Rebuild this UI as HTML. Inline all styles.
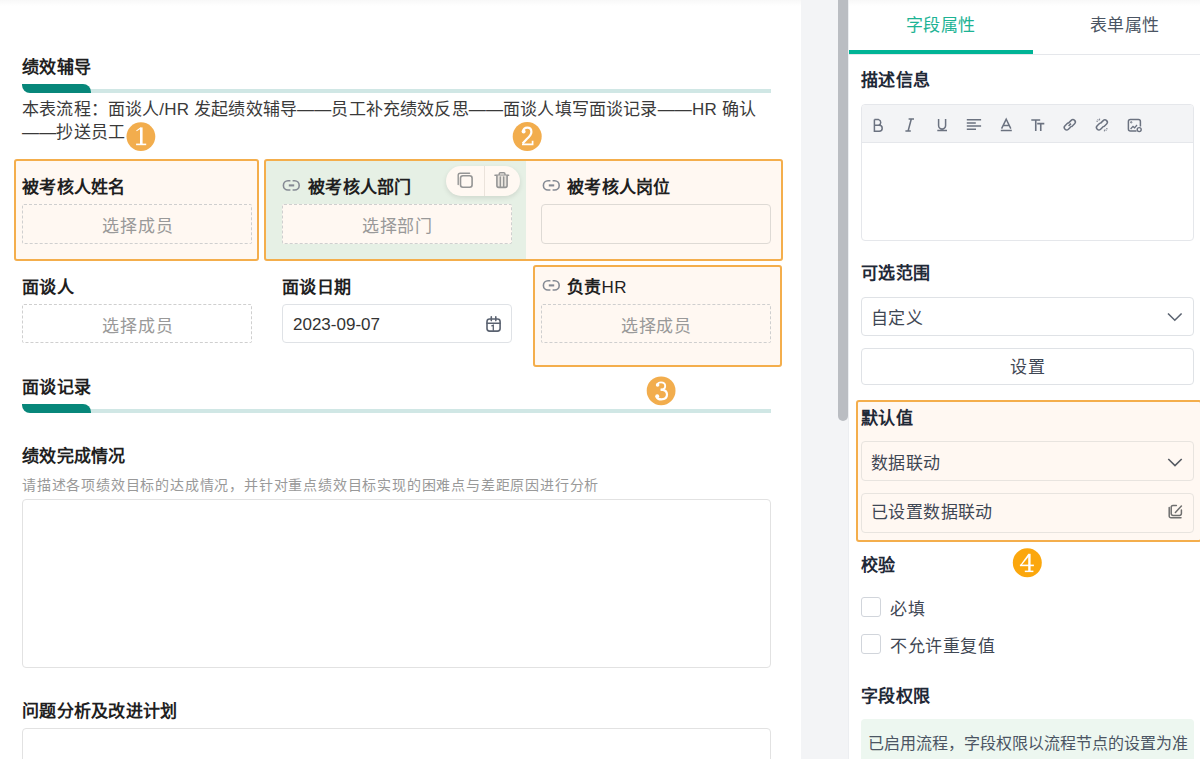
<!DOCTYPE html>
<html lang="zh-CN">
<head>
<meta charset="utf-8">
<style>
*{box-sizing:border-box}
html,body{margin:0;padding:0;width:1200px;height:759px;overflow:hidden;background:#fff;font-family:"Liberation Sans",sans-serif}
.a{position:absolute}
.t{position:absolute;white-space:nowrap;line-height:20px;font-size:17px}
.b{font-weight:bold;letter-spacing:0.35px}
.lab{color:#1f1f1f;font-weight:bold;letter-spacing:0.3px}
.dash{position:absolute;border:1px dashed #cfcfcf;border-radius:2px}
.ph{position:absolute;white-space:nowrap;line-height:20px;font-size:17px;color:#999;text-align:center;letter-spacing:0.8px;text-indent:0.8px}
.box{position:absolute;border:2px solid #f4ae4c;border-radius:3px}
.badge{position:absolute;width:29px;height:29px;border-radius:50%;background:#f2ad4d;color:#fff;font-family:"Liberation Serif",serif;font-size:26px;line-height:30px;text-align:center;-webkit-text-stroke:0.5px #fff}
.rt{color:#1f2937}
.inp{position:absolute;border:1px solid #dfe2e6;border-radius:4px}
</style>
</head>
<body>
<!-- top shade -->
<div class="a" style="left:0;top:0;width:1200px;height:6px;background:linear-gradient(#f8f8f8,#ffffff)"></div>

<!-- ============ LEFT CANVAS ============ -->
<div class="t b" style="left:22px;top:58px;color:#1f1f1f">绩效辅导</div>
<div class="a" style="left:91px;top:89px;width:680px;height:4px;background:#d0e7e5"></div>
<div class="a" style="left:22px;top:84px;width:69px;height:9px;background:#07877a;border-radius:0 8px 0 8px"></div>
<div class="t" style="left:22px;top:98px;line-height:23px;color:#3a3a3a;letter-spacing:0.17px">本表流程：面谈人/HR 发起绩效辅导——员工补充绩效反思——面谈人填写面谈记录——HR 确认<br>——抄送员工</div>

<!-- row 1 highlight boxes -->
<div class="a" style="left:14px;top:159px;width:245px;height:102px;background:#fff8f2;border-radius:3px"></div>
<div class="a" style="left:264px;top:159px;width:519px;height:102px;background:#fff8f2;border-radius:3px"></div>
<div class="a" style="left:266px;top:161px;width:260px;height:98px;background:#e6f0e5"></div>
<div class="box" style="left:14px;top:159px;width:245px;height:102px"></div>
<div class="box" style="left:264px;top:159px;width:519px;height:102px"></div>

<!-- row1 col1 -->
<div class="t lab" style="left:22px;top:178px">被考核人姓名</div>
<div class="dash" style="left:22px;top:204px;width:230px;height:40px"></div>
<div class="ph" style="left:22px;top:217px;width:231px">选择成员</div>

<!-- row1 col2 -->
<svg class="a" style="left:281px;top:178px" width="21" height="15" viewBox="0 0 21 15"><g fill="none" stroke="#858a94" stroke-width="1.6"><path d="M9.4 2.8 H7 A4.6 4.6 0 0 0 7 12 H9.4"/><path d="M11.6 2.8 H13.6 A4.6 4.6 0 0 1 13.6 12 H11.6"/><path d="M7.8 7.4 H13.2" stroke-width="2.1"/></g></svg>
<div class="t lab" style="left:308px;top:178px">被考核人部门</div>
<div class="dash" style="left:282px;top:204px;width:230px;height:40px;background:#fff8f2"></div>
<div class="ph" style="left:282px;top:217px;width:230px">选择部门</div>
<!-- action pill -->
<div class="a" style="left:446px;top:166px;width:74px;height:30px;border-radius:15px;background:#fff8f2;box-shadow:0 2px 5px rgba(0,0,0,0.10)"></div>
<div class="a" style="left:484px;top:166px;width:1px;height:30px;background:#ebe3db"></div>
<svg class="a" style="left:452px;top:168px" width="62" height="24" viewBox="452 168 62 24"><g fill="none" stroke="#959595" stroke-linecap="round"><path d="M458.2 184.5 V175.3 A2 2 0 0 1 460.2 173.3 H469.6" stroke-width="1.4"/><rect x="460.5" y="175.8" width="11.6" height="11.4" rx="2.4" stroke-width="1.6"/><path d="M495 175.3 H508.6" stroke-width="1.6"/><path d="M499.2 175 V174 A1.2 1.2 0 0 1 500.4 172.8 H503.8 A1.2 1.2 0 0 1 505 174 V175" stroke-width="1.4"/><path d="M496.9 175.5 V185.6 A1.8 1.8 0 0 0 498.7 187.4 H505.3 A1.8 1.8 0 0 0 507.1 185.6 V175.5" stroke-width="1.6" fill="#e9e4de"/><path d="M500.3 177 V186.5 M503.7 177 V186.5" stroke-width="1.4"/></g></svg>

<!-- row1 col3 -->
<svg class="a" style="left:541px;top:178px" width="21" height="15" viewBox="0 0 21 15"><g fill="none" stroke="#858a94" stroke-width="1.6"><path d="M9.4 2.8 H7 A4.6 4.6 0 0 0 7 12 H9.4"/><path d="M11.6 2.8 H13.6 A4.6 4.6 0 0 1 13.6 12 H11.6"/><path d="M7.8 7.4 H13.2" stroke-width="2.1"/></g></svg>
<div class="t lab" style="left:567px;top:178px">被考核人岗位</div>
<div class="inp" style="left:541px;top:204px;width:230px;height:40px;border-color:#dedad5"></div>

<!-- row 2 -->
<div class="a" style="left:533px;top:265px;width:249px;height:102px;background:#fff8f2;border-radius:3px"></div>
<div class="box" style="left:533px;top:265px;width:249px;height:102px"></div>

<div class="t lab" style="left:22px;top:278px">面谈人</div>
<div class="dash" style="left:22px;top:304px;width:230px;height:39px"></div>
<div class="ph" style="left:22px;top:317px;width:231px">选择成员</div>

<div class="t lab" style="left:282px;top:278px">面谈日期</div>
<div class="inp" style="left:282px;top:304px;width:230px;height:39px"></div>
<div class="t" style="left:293px;top:315px;color:#333">2023-09-07</div>
<svg class="a" style="left:484px;top:314px" width="20" height="20" viewBox="484 314 20 20"><g fill="none" stroke="#5a6270" stroke-width="1.6" stroke-linecap="round"><rect x="487" y="319" width="13.1" height="12.1" rx="2.6"/><path d="M491.3 316.8 V320.6 M495.8 316.8 V320.6 M487 323.2 H500.1"/><path d="M491.8 325.8 L493.3 325.2 V330.3" stroke-width="1.3"/></g></svg>

<svg class="a" style="left:541px;top:278px" width="21" height="15" viewBox="0 0 21 15"><g fill="none" stroke="#858a94" stroke-width="1.6"><path d="M9.4 2.8 H7 A4.6 4.6 0 0 0 7 12 H9.4"/><path d="M11.6 2.8 H13.6 A4.6 4.6 0 0 1 13.6 12 H11.6"/><path d="M7.8 7.4 H13.2" stroke-width="2.1"/></g></svg>
<div class="t lab" style="left:567px;top:278px">负责<span style="font-weight:normal;letter-spacing:0.3px">HR</span></div>
<div class="dash" style="left:541px;top:304px;width:230px;height:39px"></div>
<div class="ph" style="left:541px;top:317px;width:230px">选择成员</div>

<!-- section 2 -->
<div class="t b" style="left:22px;top:378px;color:#1f1f1f">面谈记录</div>
<div class="a" style="left:91px;top:409px;width:680px;height:4px;background:#d0e7e5"></div>
<div class="a" style="left:22px;top:404px;width:69px;height:9px;background:#07877a;border-radius:0 8px 0 8px"></div>

<div class="t lab" style="left:22px;top:447px">绩效完成情况</div>
<div class="t" style="left:22px;top:475px;font-size:14px;letter-spacing:0.8px;color:#999">请描述各项绩效目标的达成情况，并针对重点绩效目标实现的困难点与差距原因进行分析</div>
<div class="inp" style="left:22px;top:499px;width:749px;height:169px;border-color:#e2e2e2"></div>

<div class="t lab" style="left:22px;top:702px">问题分析及改进计划</div>
<div class="inp" style="left:22px;top:728px;width:749px;height:100px;border-color:#e2e2e2"></div>

<!-- ============ MIDDLE GRAY + SCROLLBAR ============ -->
<div class="a" style="left:801px;top:0;width:47px;height:759px;background:#f3f4f6"></div>
<div class="a" style="left:838px;top:-10px;width:10px;height:431px;background:#babdc2;border-radius:5px"></div>

<!-- ============ RIGHT PANEL ============ -->
<div class="a" style="left:848px;top:0;width:352px;height:759px;background:#fff;border-left:1px solid #eceef1"></div>
<div class="a" style="left:849px;top:0;width:351px;height:6px;background:linear-gradient(#f8f8f8,#ffffff)"></div>
<div class="t" style="left:906px;top:16px;color:#1db394;letter-spacing:0.4px">字段属性</div>
<div class="t" style="left:1090px;top:16px;color:#4b5563;letter-spacing:0.4px">表单属性</div>
<div class="a" style="left:849px;top:54px;width:351px;height:1px;background:#e5e7eb"></div>
<div class="a" style="left:849px;top:50px;width:184px;height:4px;background:#00b496"></div>

<div class="t b rt" style="left:861px;top:71px">描述信息</div>
<div class="inp" style="left:861px;top:104px;width:333px;height:137px;border-color:#e5e7eb"></div>
<div class="a" style="left:862px;top:105px;width:331px;height:38px;background:#f3f4f6;border-bottom:1px solid #e5e7eb;border-radius:3px 3px 0 0"></div>

<svg class="a" style="left:862px;top:106px" width="300" height="34" viewBox="862 106 300 34"><g fill="none" stroke="#6b7280" stroke-width="1.5" stroke-linecap="butt">
<path d="M874.4 119.6 H878.6 A2.9 2.9 0 0 1 878.6 125.2 H874.4 M874.4 125.2 H879.2 A3 3 0 0 1 879.2 131.2 H874.4 Z M874.4 119.6 V131.2"/>
<path d="M908.6 119 H914 M905.4 131 H910.8 M911.3 119 L908.1 131"/>
<path d="M938.6 119 V125.6 A3.5 3.5 0 0 0 945.6 125.6 V119 M937.3 130.6 H947"/>
<path d="M966.8 119.8 H981.1 M966.8 123 H975.8 M966.8 126.1 H981.1 M966.8 129.3 H976"/>
<path d="M1001.6 128.6 L1006.2 119.2 L1010.8 128.6 M1003.2 125.4 H1009.2 M1000.8 130.6 H1011.8"/>
<path d="M1031.3 120 H1040.2 M1035.75 120 V131 M1037.2 123.6 H1044.3 M1040.75 123.6 V131" stroke-width="1.6"/>
<path d="M1068.2 123.4 L1071.2 120.4 A2.3 2.3 0 0 1 1074.6 123.8 L1071.6 126.8 M1071.4 126.2 L1068.4 129.2 A2.3 2.3 0 0 1 1065 125.8 L1068 122.8 M1068.6 126 L1071 123.6"/>
<path d="M1100.4 123.4 L1103.2 120.6 A2.3 2.3 0 0 1 1106.6 124 L1103.8 126.8 M1103.6 126.2 L1100.6 129.2 A2.3 2.3 0 0 1 1097.2 125.8 L1100 123"/>
<path d="M1097.6 119.2 L1098.9 120.5 M1099.6 118.6 V120.2 M1096.4 121.2 H1098 M1106.4 130.8 L1105.1 129.5 M1104.4 131.4 V129.8 M1107.6 128.8 H1106" stroke-width="0.9"/>
<path d="M1136.5 131 H1130.4 A2 2 0 0 1 1128.4 129 V121.5 A2 2 0 0 1 1130.4 119.5 H1138.4 A2 2 0 0 1 1140.4 121.5 V126.4"/>
<path d="M1130.6 129 L1133 126.4 L1134.6 127.8 L1137 125" stroke-width="1.3"/>
<circle cx="1131.2" cy="122.3" r="0.7" stroke-width="1"/>
<circle cx="1139.2" cy="129.6" r="2" stroke-width="1.4"/>
</g></svg>
<div class="t b rt" style="left:861px;top:264px">可选范围</div>
<div class="inp" style="left:861px;top:297px;width:333px;height:39px"></div>
<div class="t" style="left:871px;top:309px;color:#3f4754;letter-spacing:0.3px">自定义</div>
<svg class="a" style="left:1166px;top:311px" width="18" height="12" viewBox="0 0 18 12"><path d="M2 2.5 L8.8 9.2 L15.6 2.5" fill="none" stroke="#5b6370" stroke-width="1.6"/></svg>
<div class="inp" style="left:861px;top:348px;width:333px;height:37px"></div>
<div class="t" style="left:1010px;top:358px;color:#3f4754;letter-spacing:0.8px">设置</div>

<!-- default value box -->
<div class="a" style="left:856px;top:400px;width:346px;height:142px;background:#fff8f2;border:2px solid #f4ae4c;border-radius:3px"></div>
<div class="t b rt" style="left:861px;top:409px">默认值</div>
<div class="inp" style="left:861px;top:441px;width:333px;height:40px;border-color:#e8e4df"></div>
<div class="t" style="left:871px;top:454px;color:#3f4754;letter-spacing:0.4px">数据联动</div>
<svg class="a" style="left:1166px;top:456px" width="18" height="12" viewBox="0 0 18 12"><path d="M2.3 3 L9 9.6 L15.7 3" fill="none" stroke="#555a62" stroke-width="1.6"/></svg>
<div class="inp" style="left:861px;top:493px;width:333px;height:40px;border-color:#e8e4df"></div>
<div class="t" style="left:871px;top:503px;color:#3f4754;letter-spacing:0.4px">已设置数据联动</div>
<svg class="a" style="left:1164px;top:500px" width="22" height="22" viewBox="1164 500 22 22"><g fill="none" stroke="#6f6f6f" stroke-linecap="round"><path d="M1176.4 505.5 H1173 A1.8 1.8 0 0 0 1171.2 507.3 V513.6 A1.8 1.8 0 0 0 1173 515.4 H1179.6 A1.8 1.8 0 0 0 1181.4 513.6 V510" stroke-width="1.5"/><path d="M1169.2 507.6 V516 A1.8 1.8 0 0 0 1171 517.8 H1181" stroke-width="1.5"/><path d="M1175.4 512.4 L1181.4 506" stroke-width="1.5"/></g></svg>

<div class="t b rt" style="left:861px;top:556px">校验</div>
<div class="inp" style="left:861px;top:597px;width:20px;height:20px;border-color:#d1d5db;border-radius:3px"></div>
<div class="t" style="left:890px;top:600px;color:#3f4754;letter-spacing:0.6px">必填</div>
<div class="inp" style="left:861px;top:634px;width:20px;height:20px;border-color:#d1d5db;border-radius:3px"></div>
<div class="t" style="left:890px;top:637px;color:#3f4754;letter-spacing:0.6px">不允许重复值</div>

<div class="t b rt" style="left:861px;top:687px">字段权限</div>
<div class="a" style="left:861px;top:719px;width:333px;height:60px;background:#edf7f0;border-radius:4px"></div>
<div class="t" style="left:868px;top:734px;font-size:16px;color:#4b5563">已启用流程，字段权限以流程节点的设置为准</div>

<!-- badges -->
<svg class="a" style="left:120px;top:115px" width="45" height="45" viewBox="120 115 45 45">
<circle cx="140.9" cy="136.6" r="14.4" fill="#f2ad4d"/>
<g fill="#fff" stroke="none">
<path d="M140 127.4 H142.6 V144.2 H140 Z"/>
<path d="M140.2 127.4 L141.2 128.6 L136.6 131.2 L136.2 130.4 Z"/>
<path d="M136.1 143.6 H146.2 V145.2 H136.1 Z"/>
</g></svg>
<svg class="a" style="left:505px;top:115px" width="45" height="45" viewBox="505 115 45 45">
<circle cx="527.2" cy="136.5" r="14.5" fill="#f2ad4d"/>
<g fill="none" stroke="#fff" stroke-linecap="butt">
<path d="M523.2 131.4 C523.2 129 525 127.6 527.2 127.6 C529.8 127.6 531.4 129.4 531.4 131.9 C531.4 134.6 529.4 136.6 526.8 139 L522.6 143.6" stroke-width="2.2"/>
<path d="M522 144.3 H532.6 V140.8" stroke-width="1.7"/>
</g>
<circle cx="523.6" cy="131.6" r="2" fill="#fff"/>
</svg>
<svg class="a" style="left:640px;top:370px" width="45" height="45" viewBox="640 370 45 45">
<circle cx="661.1" cy="390.8" r="14.4" fill="#f2ad4d"/>
<g fill="none" stroke="#fff" stroke-linecap="butt">
<path d="M657.4 384.6 C657.8 383 659.4 382.4 661 382.4 C663.4 382.4 665.2 383.8 665.2 386 C665.2 388.2 663.4 389.7 660.8 389.7" stroke-width="1.9"/>
<path d="M660.6 389.7 C664.6 389.7 667 391.6 667 394.6 C667 397.8 664.4 399.4 661.2 399.4 C659 399.4 657.2 398.6 656.6 397" stroke-width="2.2"/>
</g>
<circle cx="657.6" cy="384.9" r="1.8" fill="#fff"/>
<circle cx="657.2" cy="396.2" r="2" fill="#fff"/>
</svg>
<svg class="a" style="left:1005px;top:540px" width="45" height="45" viewBox="1005 540 45 45">
<circle cx="1027.3" cy="562.7" r="14.5" fill="#fba70d"/>
<g fill="#fff" stroke="none">
<path d="M1028.2 553.8 H1030.6 V571 H1028.2 Z"/>
<path d="M1028.4 553.8 L1029.6 555.4 L1021.6 565.2 L1020.2 565.2 Z"/>
<path d="M1019.9 564.6 H1033.9 V566.2 H1019.9 Z"/>
<path d="M1024.8 570.6 H1033.4 V572.1 H1024.8 Z"/>
</g></svg>
</body>
</html>
